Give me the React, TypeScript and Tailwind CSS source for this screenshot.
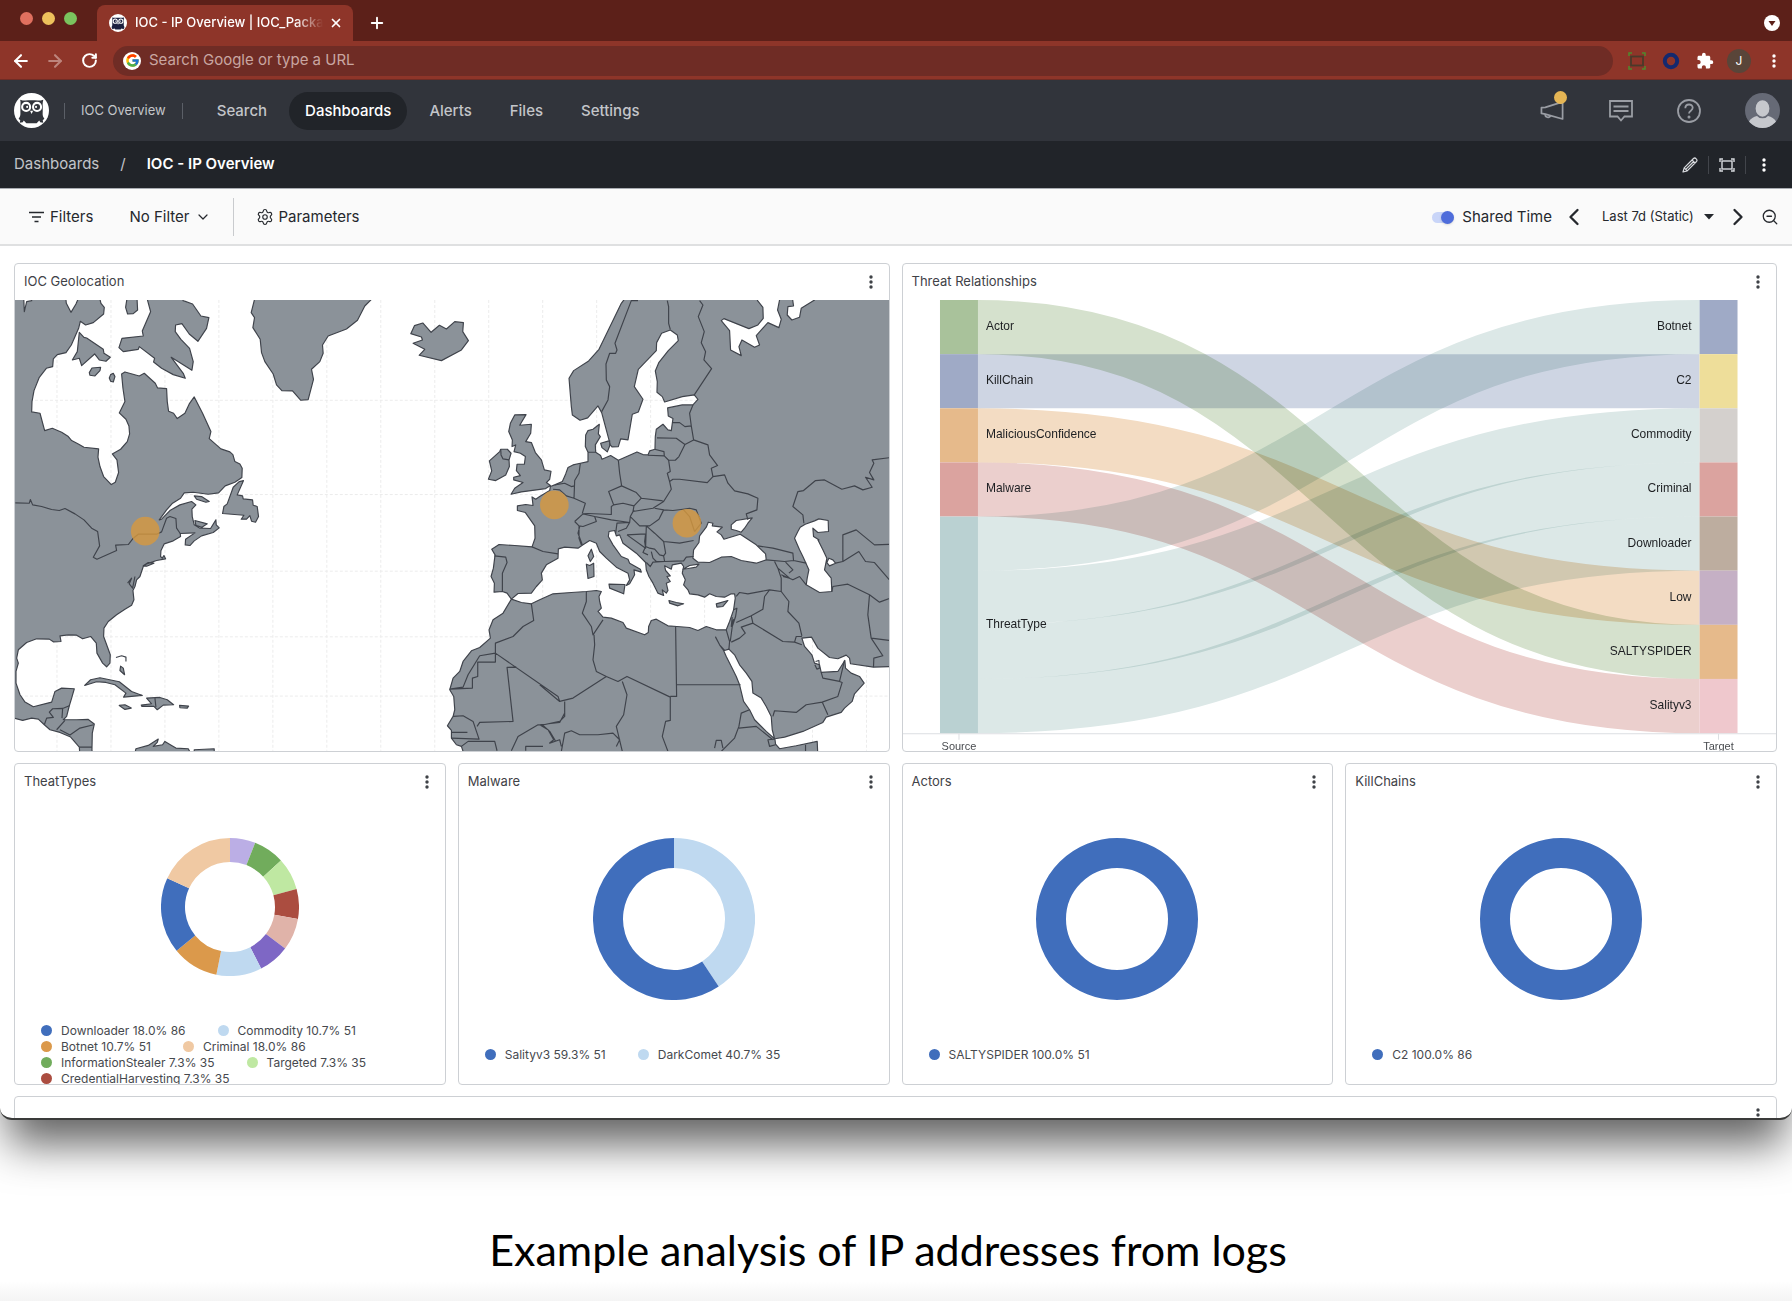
import type { ReactNode } from "react";
import { ArrowLeft, ArrowRight, ChevronDown, ChevronLeft, ChevronRight, Plus, RotateCw, Settings, X, ZoomOut } from "lucide-react";
import { FcGoogle } from "react-icons/fc";
import { MdExtension } from "react-icons/md";

/* ---------- map data ---------- */

// Every outline is stored per survey tile; the offset moves it to map space.
const tiles = {
  a: [-45, -150],
  b: [1155, -60],
  c: [1575, -30],
  d: [1575, 690],
} as const;

type Segment = [keyof typeof tiles, string];

function trace(segments: Segment[], closed: boolean) {
  const points = segments.flatMap(([tile, raw]) =>
    raw.split(" ").map((pair) => {
      const [x, y] = pair.split(",").map(Number);
      return `${x + tiles[tile][0]} ${y + tiles[tile][1]}`;
    }),
  );
  return `M${points.join("L")}${closed ? "Z" : ""}`;
}

const land: Segment[][] = [
  [["a", "30,140 197,140 199,160 213,187 228,162 234,148 300,148 303,160 313,172 311,192 280,218 257,225 241,214 236,235 214,285 198,308 172,314 160,327 158,350 139,355 118,382 102,422 96,455 95,486 120,490 134,542 157,535 185,547 205,560 215,572 235,582 252,592 296,597 294,622 300,650 311,680 334,704 346,697 356,668 351,630 337,612 362,598 382,575 389,552 387,528 378,508 358,489 375,455 369,415 365,372 375,366 418,378 433,370 466,400 473,414 500,416 502,455 506,484 521,490 532,506 555,490 568,462 583,441 608,490 633,545 628,566 663,597 690,606 699,614 705,635 720,642 727,655 726,683 705,697 676,708 656,729 625,733 580,727 553,729 542,745 518,760 500,780 478,810 485,808 510,782 540,765 575,755 588,765 576,778 577,800 583,825 600,835 632,836 648,810 649,825 658,834 640,848 605,858 583,873 570,887 556,885 557,868 585,849 541,851 542,860 520,873 493,882 483,903 482,920 487,925 492,917 497,927 470,932 440,942 430,950 420,980 410,990 405,1010 399,1022 402,1050 395,1066 375,1078 350,1095 325,1115 312,1135 311,1160 322,1190 331,1215 330,1240 320,1251 308,1240 291,1210 289,1180 272,1160 248,1167 230,1156 205,1155 180,1158 183,1175 160,1176 148,1168 110,1167 80,1178 55,1200 50,1225 55,1240 48,1265 48,1300 60,1335 75,1357 100,1371 155,1357 165,1325 185,1315 223,1317 215,1345 208,1368 200,1400 190,1410 230,1410 265,1409 283,1423 277,1450 276,1500 278,1520 240,1520 238,1492 212,1462 180,1448 150,1440 133,1425 115,1408 95,1405 68,1412 30,1402"]],
  [["a", "238,247 252,262 260,264 310,298 312,310 331,322 318,334 298,330 284,312 245,347 238,325 217,330 232,305"]],
  [["a", "276,354 302,352 300,362 285,378 270,376 268,368"]],
  [["a", "332,374 340,370 345,380 340,396 332,394 328,384"]],
  [["a", "382,140 411,140 413,180 400,191 383,192 377,172"]],
  [["a", "440,140 452,185 427,243 430,258 366,265 357,293 370,305 415,298 418,290 464,325 461,336 485,355 520,374 556,385 550,370 514,322 576,361 580,335 569,295 543,268 526,245 527,225 546,221 568,252 594,274 620,235 627,203 603,198 578,162 550,152 545,140"]],
  [["a", "766,140 754,188 764,203 759,233 781,268 785,308 795,335 820,372 830,405 846,422 878,423 903,451 925,449 941,388 935,358 960,335 970,310 968,285 985,258 1040,237 1073,211 1095,168 1115,148 1115,140"]],
  [["a", "718,695 731,692 712,735 728,738 730,747 758,750 760,766 772,770 776,800 767,817 755,814 750,797 740,808 724,808 732,796 668,791 672,770 682,762 700,712"]],
  [["a", "583,738 605,740 628,755 618,757 590,748"]],
  [["a", "585,812 622,822 606,832 588,826"]],
  [["a", "430,948 445,938 462,940 440,949"]],
  [["a", "362,1249 370,1255 374,1275 360,1262"]],
  [["a", "254,1307 272,1290 300,1284 358,1296 395,1325 427,1337 371,1342 378,1330 345,1305 318,1298 290,1296"]],
  [["a", "358,1367 375,1365 394,1375 375,1379"]],
  [["a", "424,1366 455,1362 440,1345 480,1343 502,1350 521,1365 490,1366 472,1380 462,1370 426,1370"]],
  [["a", "539,1367 566,1369 562,1375 540,1374"]],
  [["a", "405,1510 408,1497 445,1487 475,1468 472,1478 460,1490 488,1485 495,1475 515,1487 528,1495 565,1497 572,1510"]],
  [["a", "583,1500 643,1497 643,1510 583,1510"]],
  [["b", "44,137 69,129 94,157 119,136 140,147 165,125 191,128 189,155 206,182 185,210 125,242 58,226 75,208 40,190 68,180 65,171 33,161"]],
  [["b", "266,598 276,573 269,543 300,515 303,508 323,508 334,520 328,540 329,560 318,585 288,602"]],
  [["b", "345,405 379,404 360,436 395,433 393,460 378,485 395,488 407,518 425,540 434,570 454,574 450,598 440,608 452,617 438,626 410,630 365,636 334,643 345,625 370,608 342,600 342,592 362,587 350,572 352,553 374,553 377,530 362,520 343,515 348,495 337,500 338,480 327,455 332,430"]],
  // Europe, Africa and western Asia in one run: Atlantic, Baltic, Mediterranean, Gulf
  [
    ["b", "680,50 665,70 598,208 567,243 522,272 508,295 515,380 518,405 541,421 564,414 595,378 606,398"],
    ["c", "212,465 217,471 236,470 243,447 265,450 278,373 296,366 310,328 284,290 296,238 350,182 351,158 366,130 392,120 413,135 416,152 386,182 358,217 347,243 353,275 352,307 368,320 375,336 428,320 464,315 475,328 460,345 428,345 384,354 386,378 400,386 395,422 385,420 370,403 350,418 347,440 346,478 330,483 325,495 310,494 292,486 236,511 213,497 187,508 183,497 168,487 167,465 182,440 176,432 179,403 160,418 145,422 138,435 137,470 145,487 145,515 122,520 100,525 85,533 78,552 68,575 45,585"],
    ["b", "452,620 450,632 420,650 408,658 397,651 400,677 378,674 353,678 353,692 377,698 405,738 406,775 397,801 345,797 298,794 276,808 286,825 281,865 274,890 284,910 283,937 308,935 322,940 335,958 355,941 395,940 410,920 428,900 425,880 440,855 475,835 476,807 495,802 535,805 550,795 570,782 590,790 600,815 620,835 650,862 685,880 690,900 680,917 690,912 705,885 703,870 725,877 722,868 690,850 685,838 665,830 640,795 626,770 628,755 645,752"],
    ["d", "230,18 240,15 250,40 290,70 318,98 320,120 328,140 340,160 355,190 372,197 368,180 380,190 385,182 380,160 392,155 382,140 392,138 378,122 375,108 395,118 398,105 425,100 432,110 428,130 437,150 432,165 445,180 450,192 475,195 495,202 510,192 530,200 555,202 575,192 585,192 587,205 582,240 570,275 560,300 530,300 500,290 475,302 450,293 412,290 385,288 350,268 335,272 327,290 326,308 315,315 260,295 250,278 215,265 190,262 175,245 185,235 180,215 178,200 185,185 170,182 140,185 95,188 40,192 0,210"],
    ["b", "395,972 365,968 335,958 310,1000 280,1020 268,1050 272,1075 240,1103 215,1113 190,1145 180,1175 160,1195 150,1230 162,1250 165,1290 160,1310 143,1338 155,1352 155,1375 170,1395 185,1400 195,1430"],
    ["d", "835,680 833,635 770,648 720,657 708,643 706,627 735,622 790,605 850,578 860,562 905,548 915,535 938,515 945,492 974,460 960,440 935,430 918,415 916,392 895,425 845,428 840,405 825,400 817,375 795,350 787,325 816,322 835,355 870,383 895,387 920,376 930,385 933,402 1002,412 1070,410"],
    ["c", "1070,20"],
  ],
  [["c", "183,460 210,452 210,468 203,486 187,473"]],
  [["b", "575,808 582,830 572,845 565,828"]],
  [["b", "560,853 570,857 582,850 583,890 565,896"]],
  [["b", "628,913 676,914 672,942 630,925"]],
  [["d", "388,212 410,218 432,222 415,228 390,220"]],
  [["d", "530,222 565,212 550,230 532,232"]],
];

const water: Segment[][] = [
  [["a", "71,140 73,185 80,155 95,152 95,140"]],
  [
    ["c", "480,738 500,712 506,697 520,700 518,708 548,712 532,726 545,735 553,748 602,733 650,765"],
    ["d", "678,72 680,90 650,100 605,92 575,80 545,82 510,98 475,97 460,85 462,60 478,38"],
  ],
  [["c", "575,705 590,692 638,684 625,700 615,715 605,727 590,722 575,718"]],
  [["d", "430,118 450,107 478,103 470,112 445,116"]],
  [
    ["c", "782,712 797,703 825,693 838,687 866,692 867,725 835,728 820,715 822,740 838,750"],
    ["d", "835,30 850,60 862,85 855,120 875,145 877,185 840,188 800,165 803,145 808,120 790,80 780,60 765,25 775,5"],
  ],
  [["d", "868,85 880,90 888,100 870,108 862,98"]],
  [["c", "650,20 654,32 670,52 671,85 655,105 628,116 553,86 545,92 570,122 573,180 605,197 598,170 607,150 645,172 660,165 650,137 685,98 718,113 725,88 714,60 722,20"]],
  [["c", "758,20 762,48 745,50 743,75 757,90 780,82 785,55 825,30 830,20"]],
  [["d", "528,322 540,345 552,362 560,380 580,420 590,440 600,465 612,515 630,540 645,570 680,605 705,627 698,600 695,560 680,530 665,505 640,490 637,455 620,430 600,405 585,375 568,358 555,362 540,345"]],
];

const borders: Segment[] = [
  ["a", "46,759 88,760 91,749 98,765 125,770 155,779 178,782 195,776 225,792 252,810 275,835 293,845 299,888 280,922 291,928 350,902 347,886 385,884 400,865 415,853 470,853 485,846 500,805 510,800 528,806 530,835 541,851"],
  ["a", "133,1425 140,1405 160,1403 148,1387 158,1377 188,1376 186,1405"],
  ["a", "188,1376 208,1368"],
  ["a", "170,1440 195,1412"],
  ["a", "180,1440 210,1456 240,1435 281,1425"],
  ["a", "238,1492 276,1492"],
  ["a", "383,1000 395,985 388,1002 398,1015 405,980"],
  ["a", "348,1223 365,1218 378,1222 378,1235"],
  ["a", "465,1345 468,1372"],
  ["b", "303,508 304,525 310,537 328,540"],
  ["c", "295,32 275,32 226,160 232,180 228,190 210,190 199,222 200,270 210,290 205,330 186,365"],
  ["c", "383,32 387,50 387,100 392,118"],
  ["c", "480,32 490,45 476,80 494,125 485,158 498,185 493,210 516,236 464,315"],
  ["c", "460,345 450,370 455,408 436,410 420,398 400,398"],
  ["c", "455,408 462,450 436,464 410,445 352,444"],
  ["c", "436,464 418,500 407,511 387,511 374,498 325,496"],
  ["c", "374,498 373,485 345,478"],
  ["c", "462,450 505,465 510,495 534,527 515,535 520,560 503,578 420,568 400,568 390,575 383,550 392,545 387,511"],
  ["c", "520,560 555,555 565,580 585,603 625,612 655,625 652,660 620,672 625,690"],
  ["c", "236,511 240,550 246,588 290,608 305,625 365,632 372,635 395,598 390,575"],
  ["c", "122,520 118,550 105,572 103,625 137,640 128,670 215,674 215,650 222,645 207,605 246,588"],
  ["c", "145,487 168,487"],
  ["c", "45,585 75,580 95,590 105,588"],
  ["c", "40,598 60,600 80,618 103,625"],
  ["c", "222,645 250,640 283,648 305,625"],
  ["c", "283,648 280,665 340,655 372,635"],
  ["c", "165,680 215,690 270,698 272,680 283,660"],
  ["c", "105,695 130,672 165,680 170,695 130,710 118,708 105,695"],
  ["c", "118,708 118,745 125,765"],
  ["c", "272,680 300,708 330,708 358,688 372,660 345,655"],
  ["c", "372,660 400,662 430,658 450,655 470,660 485,700 465,725"],
  ["c", "430,658 450,680 465,725"],
  ["c", "320,708 345,730 372,755 420,760 462,752"],
  ["c", "228,730 232,700 270,698 260,715 235,725"],
  ["c", "262,735 318,732 315,755 318,775 262,735"],
  ["d", "320,-10 318,50 330,55 345,58 360,75 372,78 375,95 350,95 340,85 335,65"],
  ["d", "318,50 310,68 325,75"],
  ["d", "320,98 332,110 340,97 375,95 432,93 440,82 462,80"],
  ["d", "372,35 378,70 372,78"],
  ["c", "1060,502 998,510 1003,520 990,548 1003,570 978,562 998,592 970,600 945,588 907,598 855,570 828,572 792,602 775,605 760,650 790,675 793,700"],
  ["c", "910,775 910,735 950,720 1005,765 1060,763"],
  ["d", "910,15 910,95 888,100"],
  ["d", "910,95 958,65 978,95 1005,98 1050,150"],
  ["d", "655,48 700,55 760,70 762,92 735,95 680,90"],
  ["d", "705,95 715,115 750,145 730,140"],
  ["d", "738,97 760,120 748,130"],
  ["d", "762,92 800,100"],
  ["d", "715,115 725,145 725,185"],
  ["d", "590,200 600,188 625,192 690,180 725,185"],
  ["d", "725,135 760,150 780,140 800,165"],
  ["d", "877,185 880,170 925,163 990,195"],
  ["d", "990,195 985,255 995,325 1030,378 1003,385 1002,412"],
  ["d", "990,195 1020,217 1060,202"],
  ["d", "995,325 1060,333"],
  ["d", "725,185 748,215 745,245 778,280 787,318"],
  ["d", "690,180 675,200 670,238 635,258 590,278"],
  ["d", "635,258 640,280 605,292 617,310 600,325 575,337"],
  ["d", "640,280 730,335 765,337 787,345"],
  ["d", "765,337 770,320 787,320"],
  ["d", "582,240 592,235 588,260 578,290 572,335"],
  ["d", "578,262 575,290 582,268"],
  ["d", "560,300 570,335 568,358"],
  ["d", "828,395 838,392 840,415 832,418 826,405"],
  ["d", "845,428 850,445 900,455 915,392"],
  ["d", "900,455 908,458 895,500 848,517 865,555"],
  ["d", "848,517 800,525 770,548 705,543 700,560"],
  ["d", "408,290 411,500 392,500"],
  ["d", "411,465 603,465"],
  ["d", "392,502 262,440 235,455 200,440"],
  ["d", "140,185 140,215 128,250 155,290 160,315 190,270"],
  ["d", "163,315 165,345 160,390 170,425 200,440 100,505 60,515 0,465"],
  ["d", "75,515 75,550 60,578 0,585"],
  ["d", "248,455 262,495 252,555 230,590 248,665"],
  ["d", "65,665 75,610 95,603 120,615 175,615 220,610 240,630 230,650"],
  ["d", "392,502 392,572 378,575 368,620 385,665"],
  ["d", "630,540 605,550 598,590 585,625 545,665"],
  ["d", "598,595 650,590 700,630"],
  ["d", "525,655 530,632 545,632 550,655"],
  ["d", "705,628 685,630 690,650 708,645"],
  ["d", "798,645 798,665"],
  ["d", "0,585 25,600 42,630 30,640 60,630 65,650"],
  ["b", "395,972 402,1022 370,1040 340,1070 287,1090 287,1147 234,1147 234,1190 218,1195 218,1225 150,1228"],
  ["b", "240,1128 287,1120 475,1250 480,1265"],
  ["b", "150,1228 190,1222 205,1185 240,1128"],
  ["b", "350,1162 322,1163 340,1325 240,1328 232,1340"],
  ["b", "160,1310 190,1308 220,1325 238,1378 155,1375"],
  ["b", "155,1358 203,1358"],
  ["b", "230,1385 285,1385 292,1413"],
  ["b", "185,1400 205,1385 230,1385"],
  ["b", "335,1413 355,1370 415,1335 430,1337 450,1355 468,1385"],
  ["b", "378,1413 378,1400 430,1400"],
  ["b", "432,1335 480,1325 495,1310 495,1265"],
  ["b", "284,828 318,832 322,848 308,880 308,935"],
  ["b", "397,801 430,815 475,822"],
  ["b", "548,795 535,760 540,740"],
];

const meridians = Array.from({ length: 16 }, (_, i) => 126 + i * 162);
const parallels = [301, 584, 814, 1011, 1189];

const hits = [
  { x: 391, y: 694 },
  { x: 1619, y: 615 },
  { x: 2017, y: 670 },
];

function GeoMap() {
  return (
    <svg viewBox="0 0 2622 1353" className="block w-full" role="img" aria-label="IOC Geolocation">
      <g stroke="#ececec" strokeWidth="3" strokeDasharray="9 6">
        {meridians.map((x) => (
          <line key={x} x1={x} x2={x} y1="0" y2="1353" />
        ))}
        {parallels.map((y) => (
          <line key={y} x1="0" x2="2622" y1={y} y2={y} />
        ))}
      </g>
      <g stroke="#3f434b" strokeWidth="3.5" strokeLinejoin="round">
        <path fill="#8b9299" d={land.map((s) => trace(s, true)).join("")} />
        <path fill="#fff" d={water.map((s) => trace(s, true)).join("")} />
        <path fill="none" d={borders.map((s) => trace([s], false)).join("")} />
      </g>
      {hits.map((h) => (
        <circle key={h.x} cx={h.x} cy={h.y} r="43" fill="#d5983f" fillOpacity="0.82" />
      ))}
    </svg>
  );
}

/* ---------- sankey ---------- */

const UNIT = 54.17;

const sources = [
  { name: "Actor", row: 0, span: 1, color: "#a9c29b" },
  { name: "KillChain", row: 1, span: 1, color: "#9faac6" },
  { name: "MaliciousConfidence", row: 2, span: 1, color: "#e6ba8b" },
  { name: "Malware", row: 3, span: 1, color: "#dba39f" },
  { name: "ThreatType", row: 4, span: 4, color: "#bad1d2" },
];

const targets = [
  { name: "Botnet", color: "#9faac6" },
  { name: "C2", color: "#eede9a" },
  { name: "Commodity", color: "#d4d0cd" },
  { name: "Criminal", color: "#dba39f" },
  { name: "Downloader", color: "#bdad9f" },
  { name: "Low", color: "#c5b0c5" },
  { name: "SALTYSPIDER", color: "#e6ba8b" },
  { name: "Salityv3", color: "#efc8cd" },
];

const links = [
  { from: 4, to: 0, color: "#dce8e7" },
  { from: 5, to: 2, color: "#dce8e7" },
  { from: 6, to: 3, color: "#dce8e7" },
  { from: 7, to: 4, color: "#dce8e7" },
  { from: 3, to: 7, color: "#ebcfcd" },
  { from: 2, to: 5, color: "#f3dcc3" },
  { from: 1, to: 1, color: "#ced5e3" },
  { from: 0, to: 6, color: "#d5e1cd" },
];

function Sankey() {
  return (
    <svg
      viewBox="0 0 874 451"
      className="isolate block w-full font-['Liberation_Sans',sans-serif] text-[12px]"
      role="img"
      aria-label="Threat Relationships"
    >
      <path d="M0 434H874" stroke="#dcdfe2" />
      <path d="M56 434v6M816 434v6" stroke="#dcdfe2" />
      {links.map((l) => {
        const y0 = (l.from + 0.5) * UNIT;
        const y1 = (l.to + 0.5) * UNIT;
        return (
          <path
            key={`${l.from}-${l.to}`}
            d={`M75 ${y0}C436 ${y0} 436 ${y1} 797 ${y1}`}
            fill="none"
            stroke={l.color}
            strokeWidth={UNIT}
            className="mix-blend-multiply"
          />
        );
      })}
      {sources.map((s) => (
        <g key={s.name}>
          <rect x="37" y={s.row * UNIT} width="38" height={s.span * UNIT} fill={s.color} />
          <text x="83" y={(s.row + s.span / 2) * UNIT + 3} fill="#1d1f22">
            {s.name}
          </text>
        </g>
      ))}
      {targets.map((t, i) => (
        <g key={t.name}>
          <rect x="797" y={i * UNIT} width="38" height={UNIT} fill={t.color} />
          <text x="789" y={(i + 0.5) * UNIT + 3} textAnchor="end" fill="#1d1f22">
            {t.name}
          </text>
        </g>
      ))}
      <g textAnchor="middle" fill="#494c50" className="text-[11px]">
        <text x="56" y="450">Source</text>
        <text x="816" y="450">Target</text>
      </g>
    </svg>
  );
}

/* ---------- donuts ---------- */

type Slice = { color: string; to: number };

function Donut({ slices, r, hole, label }: { slices: Slice[]; r: number; hole: number; label: string }) {
  const mid = (r + hole) / 2;
  const at = (deg: number) => {
    const a = ((deg - 90) * Math.PI) / 180;
    return `${r + mid * Math.cos(a)} ${r + mid * Math.sin(a)}`;
  };
  return (
    <svg width={r * 2} height={r * 2} fill="none" role="img" aria-label={label}>
      {slices.length === 1 ? (
        <circle cx={r} cy={r} r={mid} stroke={slices[0].color} strokeWidth={r - hole} />
      ) : (
        slices.map((s, i) => {
          const start = i ? slices[i - 1].to : 0;
          return (
            <path
              key={s.to}
              d={`M${at(start)}A${mid} ${mid} 0 ${s.to - start > 180 ? 1 : 0} 1 ${at(s.to)}`}
              stroke={s.color}
              strokeWidth={r - hole}
            />
          );
        })
      )}
    </svg>
  );
}

const donuts = [
  {
    title: "TheatTypes",
    r: 69,
    hole: 45,
    legendHeight: "h-[70px]",
    slices: [
      { color: "#bbaee5", to: 21.4 },
      { color: "#71ac5c", to: 47.6 },
      { color: "#bfe8a2", to: 74.8 },
      { color: "#ab4d40", to: 100 },
      { color: "#e0b3a9", to: 127 },
      { color: "#7e67c5", to: 153.2 },
      { color: "#bfd9f0", to: 191.4 },
      { color: "#db994b", to: 230.7 },
      { color: "#406ebc", to: 294.6 },
      { color: "#f0c9a3", to: 360 },
    ],
    legend: [
      { color: "#406ebc", text: "Downloader 18.0% 86" },
      { color: "#bfd9f0", text: "Commodity 10.7% 51" },
      { color: "#db994b", text: "Botnet 10.7% 51" },
      { color: "#f0c9a3", text: "Criminal 18.0% 86" },
      { color: "#71ac5c", text: "InformationStealer 7.3% 35" },
      { color: "#bfe8a2", text: "Targeted 7.3% 35" },
      { color: "#ab4d40", text: "CredentialHarvesting 7.3% 35" },
    ],
  },
  {
    title: "Malware",
    r: 81,
    hole: 51,
    legendHeight: "h-[46px]",
    slices: [
      { color: "#bfd9f0", to: 146.5 },
      { color: "#406ebc", to: 360 },
    ],
    legend: [
      { color: "#406ebc", text: "Salityv3 59.3% 51" },
      { color: "#bfd9f0", text: "DarkComet 40.7% 35" },
    ],
  },
  {
    title: "Actors",
    r: 81,
    hole: 51,
    legendHeight: "h-[46px]",
    slices: [{ color: "#406ebc", to: 360 }],
    legend: [{ color: "#406ebc", text: "SALTYSPIDER 100.0% 51" }],
  },
  {
    title: "KillChains",
    r: 81,
    hole: 51,
    legendHeight: "h-[46px]",
    slices: [{ color: "#406ebc", to: 360 }],
    legend: [{ color: "#406ebc", text: "C2 100.0% 86" }],
  },
];

/* ---------- small parts ---------- */

function Kebab() {
  return (
    <svg width="4" height="16" fill="currentColor" aria-hidden="true">
      <circle cx="2" cy="3" r="1.7" />
      <circle cx="2" cy="8" r="1.7" />
      <circle cx="2" cy="13" r="1.7" />
    </svg>
  );
}

function Owl({ size, ink }: { size: number; ink: string }) {
  return (
    <svg width={size} height={size} viewBox="0 0 34 34" aria-hidden="true">
      <circle cx="17" cy="17" r="17" fill="#fff" />
      <path
        fill={ink}
        d="M6 6.500c3 1.300 7 .6 11 .6s8 .7 11.500-.6c-.6 2-.8 4-.6 6.500v5c0 2.500-.6 4.500 1.600 7l-1.600 1.500.6 2.500-3-.6-1-1.600-2.500 2.600H12l-2.500-2.600-1 1.600-3 .6.6-2.500L4.500 25C6.700 22.500 6.200 20.500 6.200 18v-5c.2-2.500.3-4.500-.2-6.500z"
      />
      <circle cx="11.800" cy="13.500" r="3.900" fill={ink} stroke="#fff" strokeWidth="2" />
      <circle cx="22.400" cy="13.500" r="3.900" fill={ink} stroke="#fff" strokeWidth="2" />
      <circle cx="12.800" cy="13.500" r="1" fill="#fff" />
      <circle cx="21.400" cy="13.500" r="1" fill="#fff" />
      <path fill="#fff" d="M15.600 17.200h3L17.100 20.500z" />
    </svg>
  );
}

function Card({ title, className = "", children }: { title?: string; className?: string; children?: ReactNode }) {
  return (
    <section className={`flex flex-col overflow-hidden rounded border border-[#cdd0d4] bg-white ${className}`}>
      <header className="flex h-9 shrink-0 items-center justify-between pr-4 pl-[9px] text-[#3f4247]">
        <h2 className="text-[13px]">{title}</h2>
        <button type="button" aria-label="Widget menu">
          <Kebab />
        </button>
      </header>
      {children}
    </section>
  );
}

function BrowserChrome() {
  return (
    <header className="bg-[#5c2019] text-white">
      <div className="flex h-[41px] items-end">
        <div className="mb-4 flex w-[97px] items-center gap-[9px] pl-5">
          <span className="size-[13px] rounded-full bg-[#e0705f]" />
          <span className="size-[13px] rounded-full bg-[#edc15c]" />
          <span className="size-[13px] rounded-full bg-[#7ac45e]" />
        </div>
        <div className="flex h-9 w-[256px] items-center rounded-t-lg bg-[#8e3529] pr-2.5 pl-3">
          <Owl size={18} ink="#1b1f3f" />
          <span className="ml-2 flex-1 overflow-hidden text-[13px] font-medium whitespace-nowrap [mask-image:linear-gradient(to_right,black_85%,transparent)]">
            IOC - IP Overview | IOC_Packag
          </span>
          <button type="button" aria-label="Close tab" className="ml-1.5">
            <X size={14} strokeWidth={3} />
          </button>
        </div>
        <button type="button" aria-label="New tab" className="mb-[9px] ml-[15px]">
          <Plus size={18} strokeWidth={2.5} />
        </button>
        <button type="button" aria-label="Search tabs" className="mr-3 mb-[10px] ml-auto">
          <svg width="16" height="16">
            <circle cx="8" cy="8" r="8" fill="#fff" />
            <path d="M4.500 6h7L8 11z" fill="#5c2019" />
          </svg>
        </button>
      </div>
      <div className="flex h-[39px] items-center border-b border-[#6f2c25] bg-[#8e3529] pt-px pr-4 pl-[11px]">
        <button type="button" aria-label="Back">
          <ArrowLeft size={20} strokeWidth={2.5} />
        </button>
        <button type="button" aria-label="Forward" className="ml-[14px] text-[#bd847c]">
          <ArrowRight size={20} strokeWidth={2.5} />
        </button>
        <button type="button" aria-label="Reload" className="ml-4">
          <RotateCw size={17} strokeWidth={2.8} />
        </button>
        <label className="ml-[15px] flex h-[30px] flex-1 items-center rounded-full bg-[#6f2c25] pl-2.5">
          <span className="grid size-[18px] place-items-center rounded-full bg-white">
            <FcGoogle size={15} />
          </span>
          <input
            type="text"
            aria-label="Address"
            placeholder="Search Google or type a URL"
            className="ml-2 flex-1 bg-transparent text-[15px] outline-none placeholder:text-[#c9a6a1]"
          />
        </label>
        <svg width="18" height="18" className="ml-[15px]" fill="none" aria-hidden="true">
          <path d="M1 4V1h3M14 1h3v3M17 14v3h-3M4 17H1v-3" stroke="#4f8a2e" strokeWidth="1.500" />
          <rect x="3" y="4.500" width="12" height="9" stroke="#4a3a2a" strokeWidth="1.800" />
        </svg>
        <svg width="18" height="18" className="ml-4" aria-hidden="true">
          <circle cx="9" cy="9" r="6.200" fill="none" stroke="#14296f" strokeWidth="4" />
        </svg>
        <MdExtension size={18} className="ml-4" />
        <span className="ml-[13px] grid size-6 place-items-center rounded-full bg-[#594539] text-[12px]">J</span>
        <button type="button" aria-label="Browser menu" className="ml-[21px]">
          <Kebab />
        </button>
      </div>
    </header>
  );
}

const navItems = ["Search", "Dashboards", "Alerts", "Files", "Settings"];

function AppNav() {
  return (
    <nav className="flex h-[61px] items-center bg-[#31343b] pr-3 pl-[14px] text-[#c3c5c9]">
      <Owl size={35} ink="#31343b" />
      <span className="ml-[15px] h-4 w-px bg-[#5b5f67]" />
      <span className="mx-4 text-[13px]">IOC Overview</span>
      <span className="mr-[18px] h-4 w-px bg-[#5b5f67]" />
      <div className="flex gap-[6px] text-[15px] leading-5 font-medium">
        {navItems.map((item) => (
          <a
            key={item}
            href="#"
            className={
              item === "Dashboards"
                ? "rounded-full bg-[#212429] px-4 py-[9px] text-white"
                : "rounded-full px-4 py-[9px]"
            }
          >
            {item}
          </a>
        ))}
      </div>
      <div className="ml-auto flex items-center gap-11 text-[#9a9da4]">
        <button type="button" aria-label="News" className="relative">
          <svg width="25" height="24" viewBox="0 0 26 24" fill="none" stroke="currentColor" strokeWidth="1.800">
            <path d="M1.500 8.500v6l4 .8 18 5V2.500L5.500 8.300z" strokeLinejoin="round" />
            <path d="M5.500 15.500c-.5 3 4.500 4.500 5.500 1.300" />
          </svg>
          <span className="absolute -top-2 -right-0.5 size-[13px] rounded-full bg-[#e5b554]" />
        </button>
        <button type="button" aria-label="Messages">
          <svg width="24" height="24" viewBox="0 0 24 24" fill="none" stroke="currentColor" strokeWidth="1.800">
            <path d="M1 2h22v15.500h-7.500L12 21.500l-3.500-4H1z" />
            <path d="M4.500 7.500h15M4.500 12h15" />
          </svg>
        </button>
        <button type="button" aria-label="Help">
          <svg width="24" height="24" viewBox="0 0 24 24" fill="none" stroke="currentColor" strokeWidth="1.800">
            <circle cx="12" cy="12" r="11" />
            <path d="M8.300 9.300c0-5 7.400-5 7.400-.5 0 3-3.700 2.700-3.700 5.700" />
            <circle cx="12" cy="18" r=".6" />
          </svg>
        </button>
        <button type="button" aria-label="Account">
          <svg width="35" height="35" viewBox="0 0 34 34">
            <clipPath id="avatar">
              <circle cx="17" cy="17" r="17" />
            </clipPath>
            <g clipPath="url(#avatar)">
              <rect width="34" height="34" fill="#666a76" />
              <ellipse cx="17" cy="31" rx="14" ry="9.500" fill="#c6c8cd" />
              <ellipse cx="17" cy="15" rx="7.500" ry="8.800" fill="#c6c8cd" stroke="#666a76" strokeWidth="1.600" />
            </g>
          </svg>
        </button>
      </div>
    </nav>
  );
}

function Breadcrumb() {
  return (
    <div className="flex h-[47px] items-center bg-[#212429] pr-[26px] pl-[14px] text-[15px] text-[#c3c5c9]">
      <a href="#">Dashboards</a>
      <span className="mx-[21px]">/</span>
      <h1 className="font-semibold text-white">IOC - IP Overview</h1>
      <div className="ml-auto flex items-center text-[#d8dade]">
        <button type="button" aria-label="Edit">
          <svg width="16" height="16" viewBox="0 0 16 16" fill="none" stroke="currentColor" strokeWidth="1.200" strokeLinejoin="round">
            <path d="M1 15l1.200-4.200L11.500 1.500c1.700-1.500 4.500 1.300 3 3L5.200 13.800zM10 3l3 3M2.200 10.800l3 3M4 12.200l7.700-7.700" />
          </svg>
        </button>
        <span className="mx-[10px] h-[18px] w-px bg-[#42454b]" />
        <button type="button" aria-label="Full screen">
          <svg width="16" height="14" viewBox="0 0 16 14" fill="none" stroke="currentColor" strokeWidth="1.400">
            <path d="M1 4V1h3M12 1h3v3M15 10v3h-3M4 13H1v-3" />
            <rect x="3" y="3" width="10" height="8" />
          </svg>
        </button>
        <span className="mx-[10px] h-[18px] w-px bg-[#42454b]" />
        <button type="button" aria-label="Dashboard menu" className="ml-[6px] text-white">
          <Kebab />
        </button>
      </div>
    </div>
  );
}

function FilterBar() {
  return (
    <div className="flex h-[58px] items-center border-t border-b-2 border-t-[#a9acb2] border-b-[#dfe0e1] bg-[#fafafa] pt-px pr-[13px] pl-[29px] text-[15px] text-[#25282d]">
      <button type="button" className="flex items-center gap-1.5">
        <svg width="15" height="12" fill="none" stroke="currentColor" strokeWidth="1.300" aria-hidden="true">
          <path d="M0 1.500h15M3 6h9M5.500 10.500h4" />
        </svg>
        Filters
      </button>
      <label className="ml-9 flex items-center gap-[5px]">
        <select aria-label="Filter" className="appearance-none bg-transparent">
          <option>No Filter</option>
        </select>
        <ChevronDown size={16} strokeWidth={1.8} />
      </label>
      <span className="ml-[22px] h-[38px] w-px bg-[#c9cbce]" />
      <button type="button" className="ml-[22px] flex items-center gap-1">
        <Settings size={18} strokeWidth={1.5} />
        Parameters
      </button>
      <label className="ml-auto flex items-center gap-2">
        <input
          type="checkbox"
          defaultChecked
          className="relative h-[11px] w-[22px] appearance-none rounded-full bg-[#c9d5f8] after:absolute after:-top-px after:right-0 after:size-[13px] after:rounded-full after:bg-[#4f6ddb] after:shadow-sm"
        />
        Shared Time
      </label>
      <button type="button" aria-label="Earlier" className="ml-2">
        <ChevronLeft size={28} strokeWidth={2} />
      </button>
      <label className="ml-3.5 flex items-center gap-2.5 text-[13px]">
        <select aria-label="Time range" className="appearance-none bg-transparent">
          <option>Last 7d (Static)</option>
        </select>
        <svg width="10" height="6" fill="currentColor" aria-hidden="true">
          <path d="M0 0h10L5 5.500z" />
        </svg>
      </label>
      <button type="button" aria-label="Later" className="ml-2.5">
        <ChevronRight size={28} strokeWidth={2} />
      </button>
      <button type="button" aria-label="Zoom out" className="ml-[9px]">
        <ZoomOut size={18} strokeWidth={1.7} />
      </button>
    </div>
  );
}

export default function App() {
  return (
    <div className="flex min-h-screen flex-col overflow-x-hidden bg-white font-['Inter',sans-serif]">
      <div className="overflow-hidden rounded-b-xl border-b-2 border-[#3a3b3a] bg-white shadow-[0_32px_44px_-8px_rgba(0,0,0,0.62)]">
        <BrowserChrome />
        <AppNav />
        <Breadcrumb />
        <FilterBar />
        <main className="flex flex-col gap-[11px] pt-[17px] pr-[15px] pl-[14px]">
          <div className="grid grid-cols-2 gap-3">
            <Card title="IOC Geolocation">
              <GeoMap />
            </Card>
            <Card title="Threat Relationships">
              <Sankey />
            </Card>
          </div>
          <div className="grid grid-cols-4 gap-3">
            {donuts.map((d) => (
              <Card key={d.title} title={d.title} className="h-[322px]">
                <div className="flex flex-1 items-center justify-center">
                  <Donut slices={d.slices} r={d.r} hole={d.hole} label={d.title} />
                </div>
                <ul className={`flex shrink-0 flex-wrap content-start gap-x-8 overflow-hidden px-[26px] pt-[9px] ${d.legendHeight}`}>
                  {d.legend.map((l) => (
                    <li key={l.text} className="flex items-center gap-[9px] text-[12px] leading-4 text-[#46494e]">
                      <svg width="11" height="11" fill={l.color} aria-hidden="true">
                        <circle cx="5.500" cy="5.500" r="5.500" />
                      </svg>
                      {l.text}
                    </li>
                  ))}
                </ul>
              </Card>
            ))}
          </div>
          <div className="h-[22px] overflow-hidden">
            <Card className="h-40" />
          </div>
        </main>
      </div>
      <footer className="flex flex-1 flex-col justify-between pt-[104px] text-center">
        <p className="pr-4 font-['Lato',sans-serif] text-[43px] leading-[52px] text-black">
          Example analysis of IP addresses from logs
        </p>
        <div className="h-5 bg-linear-to-b from-white to-[#f4f4f4]" />
      </footer>
    </div>
  );
}
